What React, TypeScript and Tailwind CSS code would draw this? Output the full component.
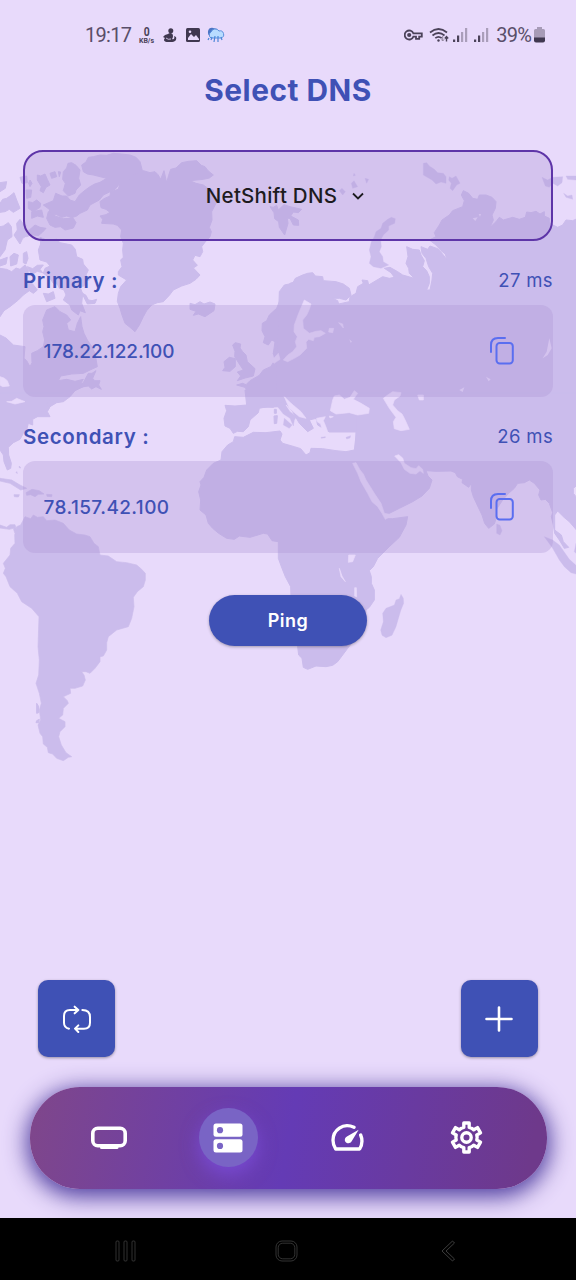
import React from "react";

const LAND = "#cbbcec";
const SEA = "#e8dafb";

function WorldMap() {
  return (
    <svg className="pointer-events-none absolute inset-0 h-[1280px] w-[576px]" viewBox="0 0 1728 3840">
      <g fill={LAND} stroke={LAND} strokeWidth="3" strokeLinejoin="round">
        {/* North America and Greenland */}
        <g transform="translate(0 420)">
          <path d="M300 185 312 176 330 168 332 155 355 148 360 130 385 118 392 106 430 92 450 98 465 95 474 104 482 118 492 92 500 128 506 106 512 88 528 84 545 68 566 64 590 62 604 76 615 80 624 92 640 105 628 114 610 118 570 122 588 130 610 135 625 146 640 150 642 170 648 190 635 215 636 240 628 262 634 275 630 290 614 308 605 320 608 335 600 350 585 346 578 360 592 376 580 384 600 405 588 418 570 430 545 438 520 450 508 466 490 485 472 488 455 495 440 512 430 530 418 555 405 575 390 562 375 550 366 525 360 505 352 484 355 460 362 440 380 420 355 405 355 395 366 380 362 360 370 352 368 330 370 310 362 290 365 270 352 256 340 252 305 250 308 238 300 228 318 224 330 217 318 208 303 203Z" />
          <path d="M245 75 258 66 265 52 280 50 300 45 320 46 340 40 365 42 390 45 408 52 420 65 427 92 400 105 388 118 360 130 345 148 310 165 298 180 270 195 262 210 240 220 230 228 215 233 200 228 185 232 170 224 150 225 148 208 130 195 160 182 167 160 186 168 200 168 210 180 225 185 238 165 256 150 270 140 284 132 300 127 320 115 280 105 262 102 250 95Z" />
          <path d="M190 95 200 84 204 70 215 68 228 76 240 90 236 115 242 135 228 150 225 160 205 168 190 152 196 130 188 118ZM112 105 122 108 135 102 142 118 150 135 138 142 130 158 120 152 124 140 112 120ZM150 100 165 95 170 110 155 115ZM145 215 155 218 165 228 190 236 220 235 228 248 220 264 195 270 182 260 165 262 150 255 140 235ZM75 275 88 270 105 255 120 262 138 265 128 276 115 287 95 284 80 290ZM85 185 98 188 110 180 122 190 120 202 100 215 85 205ZM95 215 125 210 130 232 112 228 95 235ZM0 128 20 125 16 145 0 155ZM0 190 8 178 20 175 30 168 42 158 50 180 60 205 40 217 28 208 15 215 0 217ZM78 150 95 150 92 172 80 175ZM0 260 10 258 25 248 34 260 36 290 22 300 15 330 0 350ZM42 285 52 270 50 250 60 238 68 250 78 255 76 270 84 285 68 295 60 312 52 300ZM60 112 80 108 82 128 66 130ZM30 350 42 340 55 345 50 372 32 378ZM0 360 22 352 18 372 0 378ZM70 340 80 335 84 355 78 372 70 368ZM175 95 182 96 178 110ZM90 120 96 130 90 140 86 130Z" />
          <path d="M115 330 122 312 120 292 140 300 170 298 180 308 215 315 226 328 230 350 248 358 250 372 265 390 258 405 268 420 256 422 252 438 240 440 248 462 245 490 256 518 240 512 235 525 215 510 210 495 190 480 198 465 192 450 178 445 172 432 160 430 148 412 130 400 135 385 150 378 140 366 120 360ZM245 458 258 466 265 480 276 482 290 478 285 490 262 492ZM130 460 145 462 160 455 165 475 140 485Z" />
          <path d="M0 385 20 388 35 395 48 384 60 388 75 375 85 390 82 420 98 432 112 450 100 460 88 452 70 465 55 480 30 500 12 512 0 530ZM82 380 98 386 112 376 130 375 120 388 128 398 112 394 95 404Z" />
          <path d="M0 585 18 594 40 615 75 620 72 655 80 662 90 680 96 668 95 640 112 632 130 620 134 600 128 575 132 560 128 540 140 510 165 500 180 515 200 525 212 540 200 550 205 570 225 575 232 550 242 530 246 560 252 580 262 600 274 618 285 640 292 680 270 690 250 700 215 702 182 708 175 722 200 718 225 724 250 718 244 728 250 740 225 752 210 770 190 785 170 788 150 800 142 815 150 830 0 830Z" />
          <path d="M238 742 252 724 265 700 276 700 288 692 278 715 284 722 300 722 296 735 304 748 288 740 275 747 265 738Z" />
          <path d="M570 490 585 494 600 485 612 492 630 486 645 492 642 512 615 530 595 522 580 526 588 514 570 508ZM698 615 706 608 722 612 720 624 728 635 738 645 742 665 765 686 760 708 735 714 712 722 722 708 712 696 730 690 718 672 704 650 705 634ZM668 692 675 682 672 665 688 652 706 656 706 680 690 694Z" />
          <path d="M787 550 800 542 808 525 830 505 838 485 852 460 870 430 900 420 960 430 960 590 905 600 870 640 850 690 835 665 820 640 825 605 815 600 805 615 790 608 795 590 786 572Z" />
          <path d="M710 735 728 730 738 734 750 722 778 706 790 690 812 680 825 660 820 640 828 620 850 650 880 650 940 640 940 770 870 785 855 796 840 800 742 804 744 782 752 770 735 742Z" />
          <path d="M810 200 820 202 830 196 835 210 852 194 870 200 905 208 895 218 880 216 872 228 895 240 896 256 880 255 870 235 862 235 864 250 854 285 838 262 836 245 824 236 822 218Z" />
        </g>
        {/* Northern Eurasia */}
        <g transform="translate(858 420)">
          <path d="M-20 455 -5 435 20 430 28 415 50 405 65 400 80 398 88 408 110 410 112 422 150 425 172 432 190 445 195 465 180 480 160 475 140 475 155 482 158 492 190 485 192 470 210 460 215 440 232 430 228 420 245 422 248 435 290 410 310 415 325 412 315 398 295 385 312 382 335 395 350 405 385 415 370 400 368 385 360 370 366 350 362 320 380 328 400 330 405 345 415 362 410 380 422 392 430 410 430 430 422 450 432 450 438 420 440 400 428 380 420 355 408 340 405 320 425 328 432 318 455 326 468 340 482 358 478 342 465 332 450 315 430 300 450 290 445 278 460 255 468 240 490 225 500 212 530 200 535 182 526 165 532 152 548 160 560 175 575 178 580 165 600 165 618 172 630 185 628 205 618 225 622 240 612 262 630 245 640 232 652 240 680 232 700 238 718 232 722 216 735 218 750 214 762 222 775 215 775 228 790 235 790 250 815 262 830 255 840 240 860 242 880 233 880 960 210 960 210 876 130 876 95 855 90 835 70 840 82 865 65 875 40 850 20 815 -5 785 -30 760Z" />
          <path d="M250 370 255 350 250 330 256 305 265 290 270 275 285 265 290 250 305 238 316 232 328 236 326 250 308 258 308 270 292 285 284 300 286 320 280 335 290 350 292 365 308 375 285 385 262 380ZM412 70 422 68 430 78 445 88 455 98 472 100 480 110 480 130 465 126 450 132 438 120 412 105ZM490 110 498 115 510 108 522 130 512 135 500 152 492 145 496 130 488 120ZM768 112 785 120 800 112 830 110 828 128 815 138 800 130 790 142 778 138ZM840 108 870 108 870 120 845 118ZM833 160 845 168 858 165 860 178 840 172ZM196 130 204 122 215 140 200 145ZM237 115 248 118 242 130ZM160 152 168 145 178 155 170 165ZM204 100 208 106 202 108ZM134 158 138 162 133 165ZM345 420 350 424 345 426Z" strokeWidth="1" />
        </g>
        {/* South Asia, Arabia and Africa */}
        <g transform="translate(858 1200)">
          <path d="M880 -20 880 250 862 265 862 280 870 290 880 295 880 400 850 365 834 352 815 333 806 345 806 390 826 405 832 425 848 442 835 445 820 420 806 400 802 375 796 350 800 338 790 310 778 298 765 300 758 285 762 270 745 250 730 240 715 248 695 250 685 265 668 280 650 300 630 330 632 350 625 372 608 385 596 370 588 345 575 318 562 290 556 270 556 250 548 262 528 248 530 238 514 230 508 218 495 213 450 214 420 212 426 228 438 240 430 265 408 288 380 305 340 325 300 345 300 356 320 356 365 350 360 375 340 412 310 440 275 475 262 500 250 512 256 530 256 550 265 570 265 600 250 622 240 630 238 655 220 700 185 745 155 785 140 796 120 800 90 798 65 808 52 802 48 775 38 765 35 740 20 705 10 670 0 640 15 590 14 560 -2 530 -12 505 -23 475 -23 425 -42 422 -55 402 -68 400 -108 412 -140 408 -155 418 -178 415 -202 400 -220 385 -233 370 -240 345 -258 330 -256 300 -262 275 -255 255 -258 245 -246 232 -238 210 -218 190 -195 180 -192 155 -175 135 -158 125 -154 110 -128 112 -98 97 -60 98 -18 93 -12 102 -18 120 -10 130 25 140 44 146 60 165 72 158 75 145 110 146 150 152 180 155 205 150 212 90 212 -20Z" />
          <path d="M345 583 352 595 353 610 344 632 330 680 318 706 300 713 288 706 284 690 292 665 290 640 300 625 325 615 330 600 340 596ZM775 410 800 420 820 435 850 478 880 505 880 525 855 518 835 500 820 480 800 445ZM632 372 642 376 648 392 642 405 632 400ZM-30 -20 -5 10 12 35 32 50 25 60 22 78 12 55 -8 42 -25 20 -40 0ZM870 430 880 440 880 470 865 455ZM-5 55 18 75 10 85 -8 75Z" strokeWidth="1" />
          <path d="M105 112 118 110 118 113 106 115ZM180 112 194 107 192 114 182 117Z" strokeWidth="1" />
        </g>
        {/* Americas, Iberia and Atlantic islands */}
        <g transform="translate(0 1200)">
          <path d="M0 -20 190 -20 160 -5 165 5 148 2 140 12 150 22 135 35 120 36 112 50 98 58 98 75 85 70 80 90 70 100 60 118 40 128 25 142 26 165 34 190 32 205 22 210 12 185 10 165 0 150ZM735 -30 740 15 705 18 675 16 680 32 672 55 675 78 690 85 700 100 712 94 730 95 745 80 750 60 775 38 778 25 800 20 820 22 840 8 860 0 860 -30ZM823 28 829 28 829 40 823 40ZM822 48 832 47 830 70 823 71Z" />
          <path d="M75 350 92 356 100 345 112 352 130 350 140 362 165 360 190 370 208 390 230 402 255 405 270 410 282 430 295 440 300 465 325 468 350 485 380 488 410 495 425 508 436 520 436 540 430 560 412 575 400 592 402 620 395 655 385 680 350 690 325 710 320 728 320 750 310 768 300 770 300 785 285 805 270 820 258 815 245 815 252 825 256 840 248 858 225 865 210 865 212 880 190 890 202 902 205 910 190 925 188 945 176 955 195 965 195 980 180 995 176 1010 184 1035 198 1058 215 1070 205 1072 190 1082 170 1075 158 1062 145 1058 142 1042 130 1032 128 1010 120 1000 114 975 122 960 118 930 124 910 118 880 108 850 116 825 118 780 114 740 117 650 95 625 65 605 52 580 30 560 18 530 10 520 16 505 10 490 30 465 32 445 45 430 44 405 50 380 62 375ZM0 375 20 382 30 374 45 374 52 400 44 398 40 385 28 388 0 384ZM0 235 35 240 60 255 80 265 62 270 30 250 0 243ZM78 278 96 268 118 272 132 282 115 283 105 290 92 284 80 286ZM42 284 58 284 55 291 43 290ZM140 283 156 284 155 290 141 289ZM50 215 52 220 48 218ZM58 198 62 204 58 203Z" strokeWidth="2" />
          <path d="M110 940 116 938 115 918 110 910ZM110 962 118 958 116 968 108 968Z" />
        </g>
      </g>
      {/* Inland seas, gulfs and lakes */}
      <g fill={SEA} stroke={SEA} strokeLinejoin="round" strokeWidth="2">
        <g transform="translate(858 420)">
          <path d="M55 480 75 492 70 508 62 525 50 540 52 565 70 580 90 574 105 572 118 580 100 590 85 592 82 602 68 598 60 606 62 625 42 645 25 655 5 665 -8 660 5 645 20 635 32 620 28 605 34 590 24 575 25 555 38 520ZM130 565 143 565 140 578 128 576ZM158 548 170 552 172 564ZM395 765 412 765 412 780 400 780Z" />
          <path d="M790 595 797 625 785 645 770 655 782 635ZM600 710 614 718 608 724ZM520 750 535 742 530 756ZM190 598 198 605 194 608ZM560 235 575 232 568 243ZM578 222 585 222 582 230Z" stroke="none" />
          <path d="M140 780 145 768 160 765 175 778 192 772 205 752 215 760 202 778 225 790 250 805 248 820 215 825 190 818 150 822 133 812ZM292 775 305 765 320 755 345 758 342 768 325 780 320 795 335 812 348 822 355 835 362 850 370 868 345 872 325 866 322 845 330 832 310 805Z" />
          <path d="M-5 770 15 790 45 815 60 835 40 830 10 805Z" />
        </g>
        <g transform="translate(858 1200)">
          <path d="M200 190 210 188 222 210 232 222 240 240 265 280 285 310 295 340 320 345 298 358 288 340 275 320 258 305 245 280 225 245 215 220ZM326 168 338 164 350 174 355 190 375 203 390 206 398 197 410 208 412 220 402 212 390 222 372 220 355 208 345 188ZM188 465 208 465 200 485 187 487Z" />
          <path d="M160 505 168 528 178 545 165 530ZM206 563 211 563 212 590 206 588Z" />
          <path d="M92 55 118 50 112 62 118 76 125 95 108 88 104 72 92 64ZM130 48 142 50 132 54Z" />
        </g>
        <path d="M0 1130 12 1134 22 1142 28 1158 8 1160 0 1155ZM20 1205 35 1204 50 1195 75 1205 45 1212ZM815 1082 835 1060 840 1078 822 1090Z" />
      </g>
    </svg>
  );
}

function StatusBar() {
  return (
    <header className="flex h-[60px] items-center justify-between pt-[10px] pr-[31px] pl-[85px] text-[#594e69]">
      <div className="flex items-center">
        <span className="w-[52px] font-[Roboto] text-[20px] tracking-[-0.7px]">19:17</span>
        <span className="flex w-[19px] flex-col items-center font-[Roboto] font-bold text-[#4b4259]">
          <span className="scale-x-[0.8] text-[13px] leading-[12px]">0</span>
          <span className="text-[7px] leading-[7px]">KB/s</span>
        </span>
        <svg className="ml-[7px] h-[15px] w-[14px]" viewBox="0 0 14 15" fill="#403850">
          <circle cx="7.8" cy="2.7" r="2.5" />
          <path d="M5 6C7 4 10 5 10 8c0 2-1 3-1 3 2 1 3-1 2-3l2 1c1 3-1 5-5 5H5C1 14 0 12 2 10L0 9l2-2Z" />
          <path d="M3 10q2 2 5 1" stroke="#e8dafb" fill="none" strokeWidth=".8" />
        </svg>
        <svg className="ml-[9px] h-[14px] w-[14px]" viewBox="0 0 14 14">
          <rect width="14" height="14" rx="1.500" fill="#403850" />
          <path d="m2 10 3-4 3 3 2-2 3 4v1H2Z" fill="#e8dafb" />
          <circle cx="4" cy="3.8" r="1.3" fill="#e8dafb" />
        </svg>
        <svg className="ml-[7px] h-[17px] w-[18px]" viewBox="0 0 18 17" fill="none">
          <path d="M6 1C2 0 0 4 1.500 8l4-1 1-4 4-1Z" fill="#4c75c5" />
          <path d="M4 11a3.500 3.500 0 0 1 0-6 4.500 4.500 0 0 1 8-1 3.500 3.500 0 0 1 2 7Z" fill="#b8dcff" stroke="#5a8fdc" />
          <path d="m5 10-1 3m4-4-1 6m4-6v6m3-5 1 3M2 11l-1 2" stroke="#4c87d8" strokeWidth="1.200" />
        </svg>
      </div>
      <div className="flex items-center">
        <svg className="h-[12px] w-[19px]" viewBox="0 0 19 12" fill="none" stroke="#4b4259" strokeWidth="1.800">
          <path d="M9.400 4.400A4.500 4.500 0 1 0 9.400 7.600H12v2.300h3.200V7.600H17.800V4.400Z" />
          <circle cx="5.200" cy="6" r="1.200" fill="#4b4259" />
        </svg>
        <svg className="ml-[6px] h-[16px] w-[20px]" viewBox="0 0 20 16" fill="none" stroke="#4b4259" strokeWidth="1.700">
          <path d="M1 5.500q8.500-7 17 0M3.500 8.500q6-5 12 0M6.300 11.200q3.200-2.700 6.400 0" />
          <circle cx="9.500" cy="13.500" r="1.200" fill="#4b4259" stroke="none" />
          <path d="M13.700 9v5m-1.400-1.600 1.400 1.600 1.400-1.600" strokeWidth="1" stroke="#93889f" />
          <path d="M17.500 14.500v-5m-1.700 2 1.700-2 1.700 2" strokeWidth="1.400" />
        </svg>
        <Signal className="ml-[4px]" />
        <Signal className="ml-[6px]" />
        <span className="ml-[7px] font-[Roboto] text-[20px] tracking-[-0.8px]">39%</span>
        <svg className="ml-[3px] h-[16px] w-[11px]" viewBox="0 0 11 16">
          <path d="M3 0h5v2h1.500q1.500 0 1.500 1.500V11H0V3.500Q0 2 1.500 2H3Z" fill="#a79bb7" />
          <path d="M0 10.500h11v3q0 2-2 2H2q-2 0-2-2Z" fill="#403850" />
        </svg>
      </div>
    </header>
  );
}

function Signal({ className }: { className: string }) {
  return (
    <svg className={className + " h-[16px] w-[15px]"} viewBox="0 0 15 16" fill="#4b4259">
      <path d="M0 12.500h2.200V15H0ZM4 8.500h2.200V15H4Z" />
      <path d="M8 5h2.200v10H8ZM12 1h2.200v14H12Z" fill="#aa9eba" />
    </svg>
  );
}

function CopyIcon() {
  return (
    <svg className="h-[30px] w-[26px]" viewBox="0 0 26 30" fill="none" stroke="#5a6ef0" strokeWidth="2" strokeLinecap="round">
      <path d="M2 16V9q0-7 7-7H16" />
      <rect x="7.500" y="7" width="16.300" height="20.500" rx="3.200" />
    </svg>
  );
}

type EntryProps = { label: string; ping: string; address: string; addressClass: string };

function DnsEntry({ label, ping, address, addressClass }: EntryProps) {
  return (
    <section className="mb-[13px] text-[#3f51b5]">
      <div className="flex h-[51px] items-center justify-between pt-[2px]">
        <h2 className="text-[20.500px] font-semibold tracking-[0.650px]">{label}</h2>
        <span className="text-[18.500px] tracking-[0.350px]">{ping}</span>
      </div>
      <div className="flex h-[92px] items-center justify-between rounded-[12px] bg-[#af98d6]/35 pr-[38px] pl-[20.500px]">
        <span className={"pt-px text-[19px] font-medium " + addressClass}>{address}</span>
        <CopyIcon />
      </div>
    </section>
  );
}

function NavBar() {
  return (
    <nav className="mx-[29.500px] mt-[30px] flex h-[102px] shrink-0 items-center justify-around rounded-[50px] bg-[linear-gradient(100deg,#7e468c_2%,#643bb5_50%,#6e398b_96%)] px-[20px] pb-px shadow-[0_5px_22px_3px_rgba(63,45,150,0.9)]">
      <span className="flex w-[60px] justify-center">
        <svg className="h-[24px] w-[36px]" viewBox="0 0 36 24" fill="none" stroke="white" strokeWidth="3.600">
          <rect x="1.800" y="2.300" width="32.400" height="17.500" rx="5" />
          <path d="M10.500 21.500h15.500" strokeWidth="3" strokeLinecap="round" />
        </svg>
      </span>
      <span className="flex h-[59px] w-[59px] items-center justify-center rounded-full bg-[#7964c5] shadow-[0_8px_18px_rgba(124,77,220,0.75)]">
        <svg className="h-[30px] w-[30px]" viewBox="0 0 30 30" fill="white">
          <rect x=".500" y=".500" width="29" height="13.300" rx="2.500" />
          <rect x=".500" y="16.200" width="29" height="13.300" rx="2.500" />
          <circle cx="7" cy="7.200" r="3.100" fill="#7964c5" />
          <circle cx="7" cy="22.900" r="3.100" fill="#7964c5" />
        </svg>
      </span>
      <span className="flex w-[60px] justify-center">
        <svg className="h-[27px] w-[33px]" viewBox="0 0 99 81" fill="none" stroke="white" strokeWidth="10" strokeLinecap="round" strokeLinejoin="round">
          <path d="M69 10C36-5 6 18 6 49Q6 64 14 75H86Q98 55 89 33" />
          <path d="M83 17 62 52C55 64 38 56 42 44 43 41 46 39 49 37Z" fill="white" stroke="none" />
        </svg>
      </span>
      <span className="flex w-[60px] justify-center">
        <svg className="h-[33px] w-[33px]" viewBox="-49 -49 98 98" fill="none" stroke="white" strokeWidth="10" strokeLinejoin="round">
          <path d="M-8-43H8V-30Q17-28 21.500-22.800L32.700-29.300 41.700-13.700 30.500-7.200Q33 0 30.500 7.200L41.700 13.700 32.700 29.300 21.500 22.800Q17 28 8 30V43H-8V30Q-17 28-21.500 22.800L-32.700 29.300-41.700 13.700-30.500 7.200Q-33 0-30.500-7.200L-41.700-13.700-32.700-29.300-21.500-22.800Q-17-28-8-30Z" />
          <circle r="14" />
        </svg>
      </span>
    </nav>
  );
}

function SystemBar() {
  return (
    <footer className="flex h-[62px] shrink-0 items-center bg-black pt-[3px] pl-[115px]">
      <svg className="h-[22px] w-[22px]" viewBox="0 0 22 22" fill="none" stroke="#3c3c3c" strokeWidth=".8">
        <rect x="1" y="1" width="3" height="20" rx="1" />
        <rect x="9" y="1" width="3" height="20" rx="1" />
        <rect x="17" y="1" width="3" height="20" rx="1" />
      </svg>
      <svg className="ml-[138px] h-[22px] w-[23px]" viewBox="0 0 23 22" fill="none" stroke="#404040" strokeWidth=".8">
        <rect x="1" y="1" width="21" height="20" rx="6" />
        <rect x="3.200" y="3.200" width="16.600" height="15.600" rx="4.500" />
      </svg>
      <svg className="ml-[142.500px] h-[22px] w-[15px]" viewBox="0 0 15 22" fill="none" stroke="#4c4c4c" strokeWidth=".8">
        <path d="M11.500 1 1 11 11.500 21 13.500 19 5 11 13.500 3Z" />
      </svg>
    </footer>
  );
}

export default function App() {
  return (
    <div className="relative h-[1280px] w-[576px] overflow-hidden bg-[#e8dafb] font-[Inter,sans-serif]">
      <WorldMap />
      <div className="relative flex h-full flex-col">
        <StatusBar />
        <h1 className="flex h-[62px] shrink-0 items-center justify-center pb-px text-[29.800px] font-bold tracking-[0.500px] text-[#3f51b5]">
          Select DNS
        </h1>
        <main className="flex flex-1 flex-col px-[23px] pt-[28.400px]">
          <button className="mb-[13px] flex h-[91px] shrink-0 items-center justify-center rounded-[20px] border-[2.500px] border-[#5e35a8] bg-[#af98d6]/35 pr-[6px] text-[20.500px] font-medium tracking-[0.250px] text-[#1d1b20]">
            NetShift DNS
            <svg className="ml-[15px] h-[8px] w-[12px]" viewBox="0 0 12 8" fill="none" stroke="#1d1b20" strokeWidth="1.800">
              <path d="m1 1.500 5 5 5-5" />
            </svg>
          </button>
          <DnsEntry label="Primary :" ping="27 ms" address="178.22.122.100" addressClass="tracking-[0px]" />
          <DnsEntry label="Secondary :" ping="26 ms" address="78.157.42.100" addressClass="tracking-[0.400px]" />
          <button className="mt-[29px] flex h-[51px] w-[158px] shrink-0 items-center justify-center self-center rounded-full bg-[#3f51b5] pb-px text-[18px] font-semibold tracking-[0.500px] text-white shadow-[0_1px_3px_rgba(0,0,0,0.3)]">
            Ping
          </button>
          <div className="mt-auto flex justify-between px-[15.400px]">
            <button className="flex h-[77px] w-[76.500px] items-center justify-center rounded-[10px] bg-[#3f51b5] shadow-[0_1px_3px_rgba(0,0,0,0.35)]">
              <svg className="h-[28px] w-[28px]" viewBox="0 0 84 84" fill="none" stroke="white" strokeWidth="6" strokeLinecap="round" strokeLinejoin="round">
                <path d="M18 71Q3 68 3 53V33Q3 15 21 15H45M35 5 46 15 35 25M58 15Q81 15 81 36V53Q81 71 63 71H38M46 61 36 71 46 81" />
              </svg>
            </button>
            <button className="flex h-[77px] w-[76.500px] items-center justify-center rounded-[10px] bg-[#3f51b5] shadow-[0_1px_3px_rgba(0,0,0,0.35)]">
              <svg className="h-[28px] w-[28px]" viewBox="0 0 28 28" fill="none" stroke="white" strokeWidth="2.600" strokeLinecap="round">
                <path d="M1.500 14h25M14 2.500v23" />
              </svg>
            </button>
          </div>
        </main>
        <NavBar />
        <div className="h-[29px] shrink-0" />
        <SystemBar />
      </div>
    </div>
  );
}
